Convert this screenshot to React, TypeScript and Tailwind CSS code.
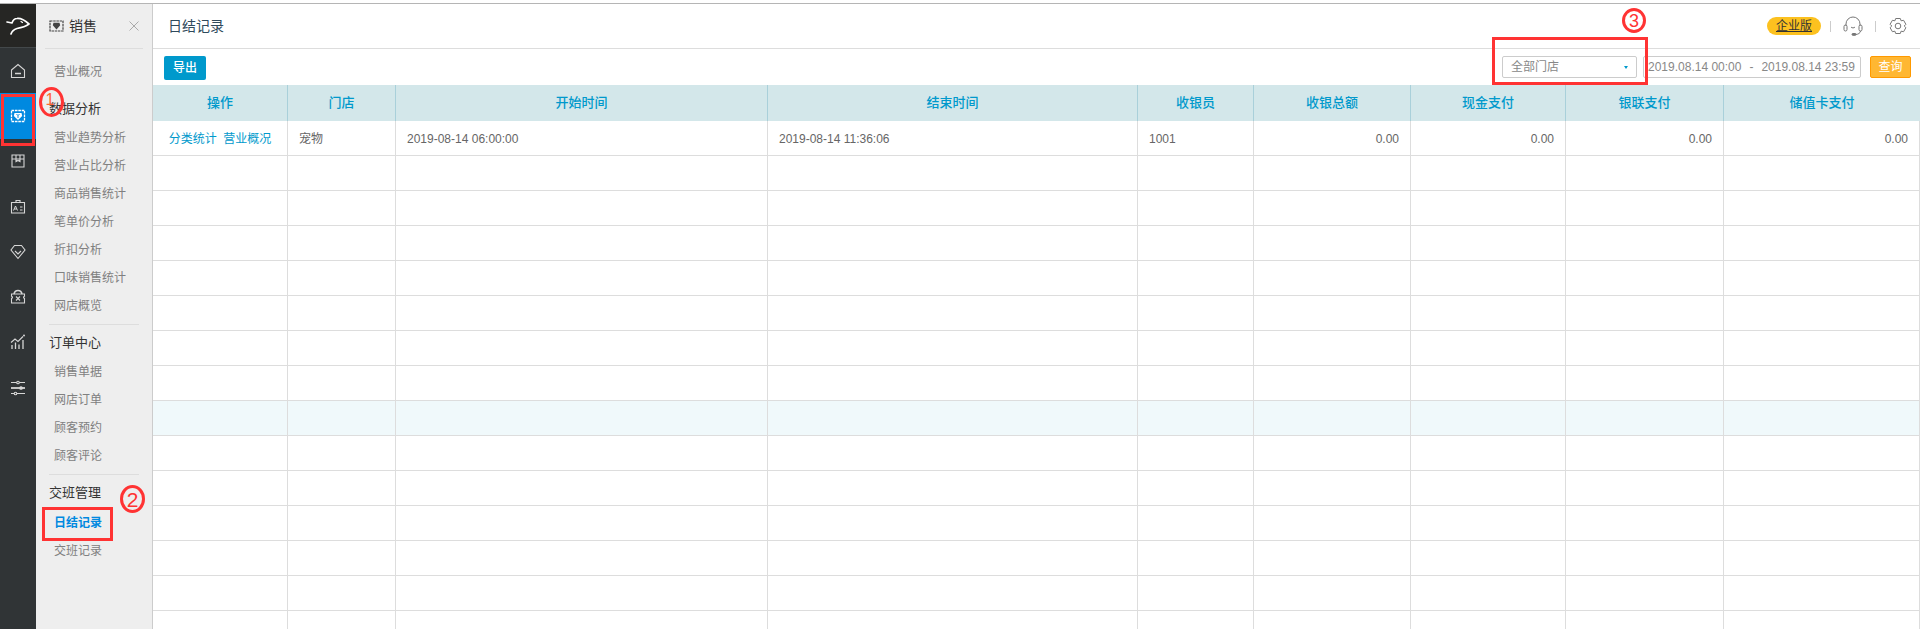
import { ReactNode } from 'react';

const railIcons: ReactNode[] = [
  <svg key="home" width="16" height="16" viewBox="0 0 16 16" fill="none" stroke="currentColor" strokeWidth="1.1">
    <path d="M1.500 7 8 1.500 14.500 7v7.500h-13z" />
    <path d="M5 10.500h6" strokeWidth="1.500" />
  </svg>,
  <svg key="money" width="16" height="16" viewBox="0 0 16 16" fill="none" stroke="currentColor" strokeWidth="1.300">
    <path d="M1.500 2.500h13M1.500 13.500h13M1.500 3v10M14.500 3v10" strokeDasharray="2.600 .8" />
    <path d="M4.500 5h7l.7 3L8 12 3.800 8z" fill="currentColor" stroke="none" />
    <path d="M6.500 6 8 7.600 9.500 6M8 7.600V10" stroke="#0089e0" strokeWidth="1" />
  </svg>,
  <svg key="box" width="16" height="16" viewBox="0 0 16 16" fill="none" stroke="currentColor" strokeWidth="1.100">
    <path d="M2 2h12v12H2zM2 6h12M6 2v6.500L8 7.400l2 1.100V2" />
  </svg>,
  <svg key="card" width="16" height="16" viewBox="0 0 16 16" fill="none" stroke="currentColor" strokeWidth="1.100">
    <path d="M1.500 3.500h13v10.500h-13zM6 1.500h4v2H6z" />
    <path d="M3.500 11.500 5.500 7l2 4.500M4.200 10h2.600M10 8h2.500M10 11h2.500" strokeWidth="1" />
  </svg>,
  <svg key="heart" width="16" height="16" viewBox="0 0 16 16" fill="none" stroke="currentColor" strokeWidth="1.100">
    <path d="M4.500 1.500h7l3.500 4.500L8 14.500 1 6z" />
    <path d="M5 7 8 10l3-3" />
  </svg>,
  <svg key="coupon" width="16" height="16" viewBox="0 0 16 16" fill="none" stroke="currentColor" strokeWidth="1.100">
    <path d="M1.500 5h13v2.300a1 1 0 0 0 0 2V14h-13V9.300a1 1 0 0 0 0-2z" />
    <path d="M4 5c.5-2.500 2-3.500 4-3.500S11.500 2.500 12 5" strokeWidth="1.500" />
    <path d="M6 7.500l4 4M10 7.500l-4 4" />
  </svg>,
  <svg key="chart" width="16" height="16" viewBox="0 0 16 16" fill="none" stroke="currentColor" strokeWidth="1.100">
    <path d="M1 8.500 5 5l3 2.500 5-5" />
    <circle cx="14" cy="1.500" r="1" fill="currentColor" stroke="none" />
    <path d="M2 11v4M5.500 8.500V15M9 10.500V15M13 6v9" strokeWidth="1.300" />
  </svg>,
  <svg key="sliders" width="16" height="16" viewBox="0 0 16 16" fill="none" stroke="currentColor" strokeWidth="1.100">
    <path d="M1 2.500h14M1 13.500h14" />
    <path d="M1 8h14" strokeWidth="1.800" />
    <circle cx="8" cy="2.500" r="1.300" fill="#303436" />
    <circle cx="11" cy="8" r="1.300" fill="currentColor" />
    <circle cx="5.500" cy="13.500" r="1.300" fill="#303436" />
  </svg>,
];

const columns = [
  { title: '操作', width: 'w-[135px]' },
  { title: '门店', width: 'w-[108px]' },
  { title: '开始时间', width: 'w-[372px]' },
  { title: '结束时间', width: 'w-[370px]' },
  { title: '收银员', width: 'w-[116px]' },
  { title: '收银总额', width: 'w-[157px]' },
  { title: '现金支付', width: 'w-[155px]' },
  { title: '银联支付', width: 'w-[158px]' },
  { title: '储值卡支付', width: 'w-[196px]' },
];

function NavGroup({ title, items, className }: { title: string; items: string[]; className: string }) {
  return (
    <div className={className}>
      <div className="h-[28px] pl-[13px] text-[13px] leading-[28px] text-[#333]">{title}</div>
      {items.map((item) => (
        <NavItem key={item} label={item} />
      ))}
    </div>
  );
}

function NavItem({ label, active }: { label: string; active?: boolean }) {
  return (
    <div className={`h-[28px] pl-[18px] text-[12px] leading-[30px] ${active ? 'font-bold text-[#0089e0]' : 'text-[#808080]'}`}>
      {label}
    </div>
  );
}

function Sidebar() {
  return (
    <aside className="w-[117px] shrink-0 border-r border-[#cccccc] bg-[#eeeeee]">
      <div className="mx-[9px] flex h-[45px] items-center border-b border-[#dddddd] pl-[4px]">
        <svg width="15" height="12" viewBox="0 0 15 12" fill="none" stroke="#444" strokeWidth="1.200">
          <path d="M1 1h13v10H1z" strokeDasharray="2.500 .7" />
          <path d="M4.500 2.800h6l.7 2.500L7.500 9.500 3.800 5.300z" fill="#444" stroke="none" />
        </svg>
        <span className="ml-[5px] text-[14px] text-[#333]">销售</span>
        <svg className="ml-auto mr-[4px]" width="10" height="10" viewBox="0 0 10 10" stroke="#aaa" strokeWidth="1">
          <path d="M.5.500l9 9M9.500.500l-9 9" />
        </svg>
      </div>
      <div className="pt-[8px]">
        <NavItem label="营业概况" />
      </div>
      <NavGroup
        title="数据分析"
        className="mt-[10px]"
        items={['营业趋势分析', '营业占比分析', '商品销售统计', '笔单价分析', '折扣分析', '口味销售统计', '网店概览']}
      />
      <div className="mx-[13px] mt-[5px] border-b border-[#dddddd]" />
      <NavGroup title="订单中心" className="mt-[4px]" items={['销售单据', '网店订单', '顾客预约', '顾客评论']} />
      <div className="mx-[13px] mt-[5px] border-b border-[#dddddd]" />
      <div className="mt-[4px]">
        <div className="h-[29px] pl-[13px] text-[13px] leading-[28px] text-[#333]">交班管理</div>
        <NavItem label="日结记录" active />
        <NavItem label="交班记录" />
      </div>
    </aside>
  );
}

function Table() {
  const rows = Array.from({ length: 14 });
  const cell = 'h-[35px] border-r border-b border-[#dddddd] px-[11px] pt-[2px] text-[12px]';

  return (
    <table className="w-[1767px] table-fixed border-separate border-spacing-0">
      <colgroup>
        {columns.map((col) => (
          <col key={col.title} className={col.width} />
        ))}
      </colgroup>
      <thead>
        <tr>
          {columns.map((col) => (
            <th key={col.title} className="h-[36px] border-r border-[#a9d0da] bg-[#d3e7ea] text-center text-[13px] font-medium text-[#0099cc] last:border-r-0">
              {col.title}
            </th>
          ))}
        </tr>
      </thead>
      <tbody>
        <tr>
          <td className={`${cell} text-center text-[#0099cc]`}>分类统计&nbsp;&nbsp;营业概况</td>
          <td className={`${cell} text-[#666]`}>宠物</td>
          <td className={`${cell} text-[#666]`}>2019-08-14 06:00:00</td>
          <td className={`${cell} text-[#666]`}>2019-08-14 11:36:06</td>
          <td className={`${cell} text-[#666]`}>1001</td>
          <td className={`${cell} text-right text-[#666]`}>0.00</td>
          <td className={`${cell} text-right text-[#666]`}>0.00</td>
          <td className={`${cell} text-right text-[#666]`}>0.00</td>
          <td className={`${cell} text-right text-[#666]`}>0.00</td>
        </tr>
        {rows.map((_, i) => (
          <tr key={i} className={i === 7 ? 'bg-[#f0f9fb]' : ''}>
            {columns.map((col) => (
              <td key={col.title} className={cell} />
            ))}
          </tr>
        ))}
      </tbody>
    </table>
  );
}

export default function App() {
  return (
    <div className="relative flex h-[629px] w-[1920px] flex-col overflow-hidden bg-white font-['Liberation_Sans','Noto_Sans_CJK_SC',sans-serif]">
      <div className="h-[4px] shrink-0 border-b border-[#b5b5b5] bg-white" />
      <div className="flex min-h-0 flex-1">
        <nav className="w-[36px] shrink-0 bg-[#303436]">
          <div className="flex h-[44px] items-center justify-center border-b border-[#43484a] bg-[#262624]">
            <svg width="24" height="18" viewBox="0 0 24 18" fill="none" stroke="#fff" strokeWidth="1.700" strokeLinejoin="round" strokeLinecap="round">
              <path d="M1 5l5 1C7 3 9 1.500 11 1.500 15 1 19 3.500 23 7 19 10 14 11 11 11.500 8 12.500 6 14 5 17" />
              <path d="M15 4.500l1.500 1" strokeWidth="1.200" />
            </svg>
          </div>
          {railIcons.map((icon, i) => (
            <div key={i} className={`flex h-[45.3px] items-center justify-center ${i === 1 ? 'bg-[#0089e0] text-white' : 'text-[#d6d6d6]'}`}>
              {icon}
            </div>
          ))}
        </nav>
        <Sidebar />
        <main className="min-w-0 flex-1">
          <header className="flex h-[45px] items-center border-b border-[#dddddd] pl-[15px]">
            <span className="text-[14px] text-[#2f4a5c]">日结记录</span>
            <span className="ml-auto flex h-[18px] w-[54px] items-center justify-center rounded-full bg-[#fcc11f] text-[12px] text-[#333] underline">企业版</span>
            <span className="ml-[9px] h-[11px] w-px bg-[#cccccc]" />
            <svg className="ml-[12px]" width="20" height="20" viewBox="0 0 20 20" fill="none" stroke="#777" strokeWidth="1">
              <path d="M3 10V8a7 7 0 0 1 14 0v2" />
              <rect x="1" y="9" width="3" height="6" rx="1.500" />
              <rect x="16" y="9" width="3" height="6" rx="1.500" />
              <path d="M17.500 15c0 2-2.500 3.500-5 3.500" />
              <rect x="9" y="17.500" width="4" height="1.800" rx=".9" fill="#777" />
              <path d="M8 11c1 1.200 3 1.200 4 0" />
            </svg>
            <span className="ml-[12px] h-[11px] w-px bg-[#cccccc]" />
            <svg className="ml-[13px] mr-[13px]" width="18" height="18" viewBox="0 0 18 18" fill="none" stroke="#777" strokeWidth="1">
              <path d="M6.700 1.500h4.600l.8 2.300 2.500-.5 2.300 4-1.700 1.700 1.700 1.700-2.300 4-2.500-.5-.8 2.300H6.700l-.8-2.300-2.500.5-2.300-4L2.800 9 1.100 7.300l2.300-4 2.500.5z" strokeLinejoin="round" />
              <circle cx="9" cy="9" r="2.800" />
            </svg>
          </header>
          <div className="flex h-[36px] items-start pt-[7px] pl-[11px] pr-[9px]">
            <button className="h-[24px] w-[42px] rounded-[2px] bg-[#0099cc] text-[12px] font-medium text-white">导出</button>
            <div className="ml-auto flex h-[22px] w-[135px] items-center justify-between rounded-[2px] border border-[#cccccc] pl-[8px] pr-[8px] text-[12px] text-[#888]">
              全部门店
              <span className="border-x-[2px] border-t-[3px] border-x-transparent border-t-[#0099cc]" />
            </div>
            <div className="ml-[6px] flex h-[22px] w-[218px] items-center rounded-[2px] border border-[#cccccc] pl-[4px] text-[12px] text-[#888]">
              <span>2019.08.14 00:00</span>
              <span className="mx-[8px]">-</span>
              <span>2019.08.14 23:59</span>
            </div>
            <button className="ml-[9px] h-[22px] w-[41px] rounded-[2px] border border-[#ff9900] bg-[#ffb732] text-[12px] text-white">查询</button>
          </div>
          <Table />
        </main>
      </div>

      {/* red annotations drawn on top of the screenshot */}
      <div className="absolute left-[1px] top-[94px] h-[52px] w-[34px] border-[3px] border-[#ff3333]" />
      <div className="absolute left-[39px] top-[87px] flex h-[30px] w-[25px] items-start justify-center rounded-[50%] border-[3px] border-[#ff3333] pr-[3px] pt-[2px] text-[16px] leading-none text-[#ff6633]">1</div>
      <div className="absolute left-[42px] top-[507px] h-[34px] w-[71px] border-[3px] border-[#ff3333]" />
      <div className="absolute left-[120px] top-[485px] flex h-[28px] w-[25px] items-center justify-center rounded-[50%] border-[3px] border-[#ff3333] text-[21px] leading-none text-[#ff3333]">2</div>
      <div className="absolute left-[1622px] top-[8px] flex h-[25px] w-[24px] items-center justify-center rounded-[50%] border-[3px] border-[#ff3333] text-[18px] leading-none text-[#ff3333]">3</div>
      <div className="absolute left-[1492px] top-[37px] h-[48px] w-[156px] border-[3px] border-[#ff3333]" />
    </div>
  );
}
